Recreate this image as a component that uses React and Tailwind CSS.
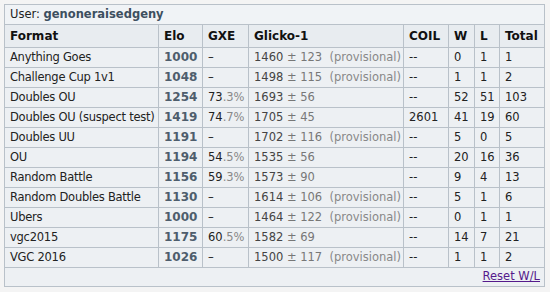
import React from 'react';

const rows = [
  { format: 'Anything Goes', elo: '1000', gxe: null, r: '1460', rd: '123', prov: true, coil: '--', w: '0', l: '1', t: '1' },
  { format: 'Challenge Cup 1v1', elo: '1048', gxe: null, r: '1498', rd: '115', prov: true, coil: '--', w: '1', l: '1', t: '2' },
  { format: 'Doubles OU', elo: '1254', gxe: ['73', '.3%'], r: '1693', rd: '56', prov: false, coil: '--', w: '52', l: '51', t: '103' },
  { format: 'Doubles OU (suspect test)', elo: '1419', gxe: ['74', '.7%'], r: '1705', rd: '45', prov: false, coil: '2601', w: '41', l: '19', t: '60' },
  { format: 'Doubles UU', elo: '1191', gxe: null, r: '1702', rd: '116', prov: true, coil: '--', w: '5', l: '0', t: '5' },
  { format: 'OU', elo: '1194', gxe: ['54', '.5%'], r: '1535', rd: '56', prov: false, coil: '--', w: '20', l: '16', t: '36' },
  { format: 'Random Battle', elo: '1156', gxe: ['59', '.3%'], r: '1573', rd: '90', prov: false, coil: '--', w: '9', l: '4', t: '13' },
  { format: 'Random Doubles Battle', elo: '1130', gxe: null, r: '1614', rd: '106', prov: true, coil: '--', w: '5', l: '1', t: '6' },
  { format: 'Ubers', elo: '1000', gxe: null, r: '1464', rd: '122', prov: true, coil: '--', w: '0', l: '1', t: '1' },
  { format: 'vgc2015', elo: '1175', gxe: ['60', '.5%'], r: '1582', rd: '69', prov: false, coil: '--', w: '14', l: '7', t: '21' },
  { format: 'VGC 2016', elo: '1026', gxe: null, r: '1500', rd: '117', prov: true, coil: '--', w: '1', l: '1', t: '2' },
];

const td = 'border border-[#b9c1c9] h-[20px] p-0 pl-[5px] whitespace-nowrap overflow-hidden';
const th = 'border border-[#b9c1c9] pl-[5px] h-[23px] text-left font-bold text-[12px] text-[#111]';

export default function App() {
  return (
    <div className="w-[550px] h-[292px] bg-[#f4f4f4] pt-[4px] pl-[4px] font-['DejaVu_Sans',Verdana,sans-serif] text-[11.5px] text-[#222]">
      <table className="w-[540px] table-fixed border-collapse bg-[#edf0f3] border border-[#b9c1c9]">
        <colgroup>
          <col className="w-[154px]" />
          <col className="w-[44px]" />
          <col className="w-[46px]" />
          <col className="w-[155px]" />
          <col className="w-[45px]" />
          <col className="w-[26px]" />
          <col className="w-[25px]" />
          <col className="w-[45px]" />
        </colgroup>
        <tbody>
          <tr>
            <td colSpan={8} className="h-[20px] pl-[5px] border border-[#b9c1c9] bg-[#f0f3f6]">
              User: <b className="text-[#3d4f5f]">genoneraisedgeny</b>
            </td>
          </tr>
          <tr className="bg-[#e8ecf0]">
            <th className={th}>Format</th>
            <th className={th}>Elo</th>
            <th className={th}>GXE</th>
            <th className={th}>Glicko-1</th>
            <th className={th}>COIL</th>
            <th className={th}>W</th>
            <th className={th}>L</th>
            <th className={th}>Total</th>
          </tr>
          {rows.map((row) => (
            <tr key={row.format}>
              <td className={`${td} tracking-[-0.25px]`}>{row.format}</td>
              <td className={td}>
                <b className="text-[#4e5d6c] text-[12px]">{row.elo}</b>
              </td>
              <td className={td}>
                {row.gxe ? (
                  <>
                    {row.gxe[0]}
                    <span className="text-[#888]">{row.gxe[1]}</span>
                  </>
                ) : (
                  '–'
                )}
              </td>
              <td className={td}>
                <span className="text-[#444]">{row.r}</span>
                <span className="text-[#777]"> ± {row.rd}</span>
                {row.prov && <span className="text-[#888]">{'\u00a0 (provisional)'}</span>}
              </td>
              <td className={td}>{row.coil}</td>
              <td className={td}>{row.w}</td>
              <td className={td}>{row.l}</td>
              <td className={td}>{row.t}</td>
            </tr>
          ))}
          <tr>
            <td colSpan={8} className="h-[19px] text-right pr-[4px] border border-[#b9c1c9]">
              <a href="#" className="text-[#551a8b] underline">Reset W/L</a>
            </td>
          </tr>
        </tbody>
      </table>
    </div>
  );
}
